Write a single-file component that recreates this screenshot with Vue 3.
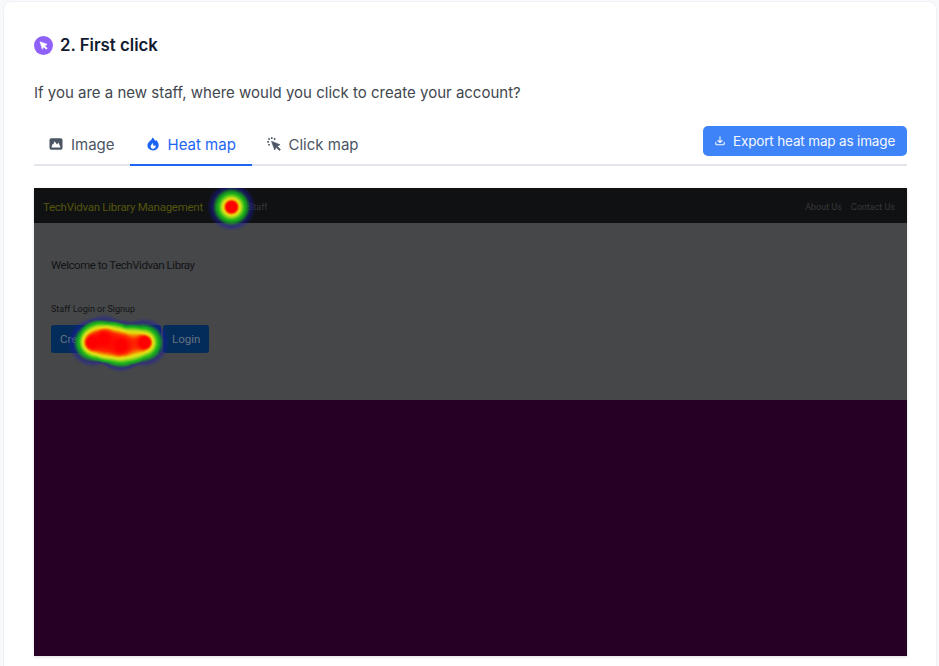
<script setup>
const spots = [
  { x: 197.5, y: 19, r: 24.5, w: 1 },
  { x: 58.5, y: 154.5, r: 25, w: 1 },
  { x: 70, y: 151, r: 25, w: 1 },
  { x: 87, y: 157.5, r: 27, w: 1 },
  { x: 86, y: 158, r: 26, w: 0.5 },
  { x: 76, y: 155, r: 24, w: 0.4 },
  { x: 98, y: 156, r: 24, w: 0.4 },
  { x: 110.5, y: 154.5, r: 25, w: 1 },
]
</script>

<template>
  <main class="card">
    <header class="heading">
      <span class="badge">
        <svg width="19" height="19" viewBox="0 0 19 19"><path d="M6 5.8 13.2 8.3 10.8 9.7 13.3 12.2 12.2 13.3 9.7 10.9 8.3 13.2Z" fill="#fff" stroke="#fff" stroke-width=".5" stroke-linejoin="round" /></svg>
      </span>
      <h1>2. First click</h1>
    </header>
    <p class="question">If you are a new staff, where would you click to create your account?</p>

    <div class="toolbar">
      <nav class="tabs">
        <a class="tab image">
          <svg width="14" height="14" viewBox="0 0 14 14"><path fill="currentColor" fill-rule="evenodd" d="M2.200 1.300h9.600q1.700 0 1.700 1.700v8q0 1.700-1.700 1.700H2.200Q.5 12.700.5 11V3Q.5 1.300 2.200 1.300ZM2.500 10.600h9.100L9.400 5.500 8 7.600 5.600 4.200 4.200 7.400 3.500 6.900Z" /></svg>
          <span>Image</span>
        </a>
        <a class="tab heat active">
          <svg width="14" height="14" viewBox="0 0 14 14"><path fill="currentColor" fill-rule="evenodd" d="M6.300.5C8 1.600 8.900 2.900 9.200 4.100L10.200 3C11.700 4.500 12.700 6.400 12.700 8.100 12.700 11.400 10.300 13.500 7.100 13.500S1.400 11.400 1.400 8.300C1.400 6 3.600 4.200 5 3 5.900 2.200 6.200 1.500 6.300.5ZM6.800 6C5.900 7.200 4.700 8.200 4.700 9.500 4.700 10.900 5.700 11.800 7.100 11.800S9.600 10.900 9.600 9.600C9.600 9 9.400 8.500 9.100 8.100L8 9.300C7.400 8.600 7.100 7.400 6.800 6Z" /></svg>
          <span>Heat map</span>
        </a>
        <a class="tab click">
          <svg width="14" height="14" viewBox="0 0 14 14"><path fill="currentColor" stroke="currentColor" stroke-width=".6" stroke-linejoin="round" d="M4.500 4.300 13 7.700 10.200 9.200 13.500 12.500 12.400 13.500 9.100 10.300 7.700 13Z" /><path fill="none" stroke="currentColor" stroke-width="1.600" d="M4.800 .3v1.600M1.400 1.400 2.600 2.600M.3 4.900h1.600M1.400 8.400 2.600 7.200M8.300 1.400 7.100 2.600" /></svg>
          <span>Click map</span>
        </a>
      </nav>
      <button class="export">
        <svg width="10" height="10" viewBox="0 0 10 10" fill="none" stroke="currentColor" stroke-width="1.100" stroke-linecap="round" stroke-linejoin="round"><path d="M5 .7v5.600M2.900 4.500 5 6.500 7.100 4.500M.8 6.300V7.500Q.8 8.800 2.100 8.800H7.900Q9.200 8.800 9.200 7.500V6.300" /></svg>
        <span>Export heat map as image</span>
      </button>
    </div>

    <section class="shot">
      <div class="navbar">
        <span class="brand">TechVidvan Library Management</span>
        <span class="link home">Home</span>
        <span class="link staff">Staff</span>
        <span class="link about">About Us</span>
        <span class="link contact">Contact Us</span>
      </div>
      <div class="content">
        <div class="welcome">Welcome to TechVidvan Libray</div>
        <div class="hint">Staff Login or Signup</div>
        <div class="buttons">
          <span class="btn create">Create Account</span>
          <span class="btn login">Login</span>
        </div>
      </div>
      <div class="rest"></div>
      <svg class="heatmap" width="300" height="220" viewBox="0 0 300 220">
        <defs>
          <radialGradient id="spot">
            <stop offset="0" stop-color="#000" />
            <stop offset=".2" stop-color="#000" />
            <stop offset="1" stop-color="#000" stop-opacity="0" />
          </radialGradient>
          <filter id="ramp" filterUnits="userSpaceOnUse" x="0" y="0" width="300" height="220" color-interpolation-filters="sRGB">
            <feColorMatrix values="0 0 0 1 0  0 0 0 1 0  0 0 0 1 0  0 0 0 1 0" />
            <feComponentTransfer>
              <feFuncR type="table" tableValues=".1 .1 .1 .1 .1 .1 .1 .1 .1 .1 .1 .1 .2 .35 .52 .7 .85 .93 .95 1 1" />
              <feFuncG type="table" tableValues=".1 .1 .1 .1 .1 .1 .2 .35 .48 .6 .68 .72 .75 .78 .82 .86 .88 .8 .5 .15 0" />
              <feFuncB type="table" tableValues=".7 .7 .7 .7 .7 .65 .5 .35 .25 .18 .12 .1 .1 .1 .1 .1 .1 .05 0 0 0" />
              <feFuncA type="table" tableValues="0 .08 .17 .27 .37 .47 .56 .66 .75 .82 .88 .92 .96 1 1 1 1 1 1 1 1" />
            </feComponentTransfer>
          </filter>
        </defs>
        <g filter="url(#ramp)">
          <circle v-for="(p, i) in spots" :key="i" :cx="p.x" :cy="p.y" :r="p.r" :opacity="p.w" fill="url(#spot)" />
        </g>
      </svg>
    </section>
  </main>
</template>

<style>
body { background: #f8f9fb; overflow: hidden; }
</style>

<style scoped>
* { box-sizing: border-box; }
.card { width: 934px; height: 690px; margin: 1px 0 0 3px; padding: 32px 29px 0 30px; background: #fff; border: 1px solid #eef1f5; border-radius: 8px; font-family: Inter, sans-serif; }
.heading { display: flex; align-items: center; height: 22px; gap: 7px; }
.badge { width: 19px; height: 19px; border-radius: 50%; background: #9061f9; display: flex; }
h1 { margin: 0; font-size: 16.800px; line-height: 22px; font-weight: 600; color: #111a30; white-space: nowrap; }
.question { margin: 24px 0 0; padding-top: 1px; font-size: 15px; line-height: 24px; color: #42474f; white-space: nowrap; }
.toolbar { display: flex; justify-content: space-between; margin-top: 21px; height: 40px; border-bottom: 2px solid #e2e5ec; }
.tabs { display: flex; height: 40px; }
.tab { display: flex; align-items: center; gap: 8px; font-size: 15px; color: #4b5563; height: 40px; padding: 0 15px 4px; white-space: nowrap; }
.tab svg { flex: none; }
.image { width: 95.500px; }
.heat { width: 122px; padding-left: 16px; }
.active { color: #1c64f2; border-bottom: 2px solid #1c64f2; padding-bottom: 2px; }
.export { display: flex; align-items: center; gap: 8px; width: 204px; height: 30px; padding: 0 0 0 12px; border: 0; border-radius: 5px; background: #3f83f8; color: #f5f9ff; font: 13.500px Inter, sans-serif; letter-spacing: -.16px; white-space: nowrap; }
.shot { position: relative; margin-top: 22px; width: 873px; height: 468px; font-family: Roboto, sans-serif; box-shadow: 0 1px 3px #0002; white-space: nowrap; }
.navbar { height: 35px; display: flex; align-items: center; padding: 3px 12px 0 9px; background: #101113; }
.brand { width: 172px; font-size: 11.500px; letter-spacing: -.27px; color: #54550e; }
.link { font-size: 9px; color: #37383a; }
.home { width: 33px; }
.about { margin-left: auto; margin-right: 9px; }
.content { height: 177px; background: #464749; padding: 35px 0 0 17px; color: #131416; }
.welcome { font-size: 11.500px; line-height: 14px; letter-spacing: -.46px; }
.hint { margin-top: 31px; font-size: 9px; line-height: 12px; }
.buttons { display: flex; gap: 2px; margin-top: 10px; }
.btn { height: 28px; line-height: 29px; border-radius: 3px; background: #042c5b; color: #66737f; font-size: 11.500px; padding-left: 9px; overflow: hidden; }
.create { width: 110px; }
.login { width: 46px; }
.rest { height: 256px; background: #270025; }
.heatmap { position: absolute; left: 0; top: 0; }
</style>
